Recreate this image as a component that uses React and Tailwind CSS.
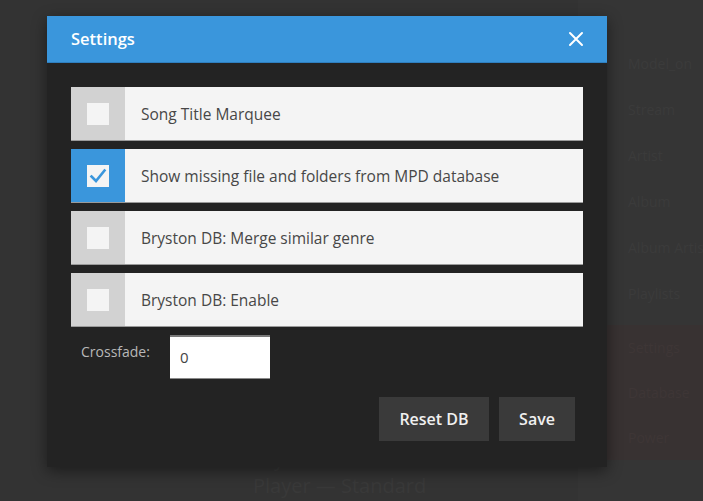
import React from "react";

const rows = [
  { label: "Song Title Marquee", checked: false },
  { label: "Show missing file and folders from MPD database", checked: true },
  { label: "Bryston DB: Merge similar genre", checked: false },
  { label: "Bryston DB: Enable", checked: false },
];

const sideItems = ["Model_on", "Stream", "Artist", "Album", "Album Artist", "Playlists"];

export default function App() {
  return (
    <div
      className="relative w-[703px] h-[501px] overflow-hidden bg-[#333333]"
      style={{ fontFamily: '"Open Sans", "Noto Sans", sans-serif' }}
    >
      {/* background page */}
      <div className="flex h-full">
        <div className="flex-1 flex flex-col justify-end pl-[253px] pb-[2px] text-[#393939] text-[20px] leading-[27px] whitespace-nowrap overflow-hidden">
          <div>Bryston Media</div>
          <div>Player — Standard</div>
        </div>
        <div className="w-[125px] flex flex-col bg-[#353535] pt-[40px] overflow-hidden">
          <div className="flex flex-col pl-[50px] text-[#3b3b3b] text-[14px]">
            {sideItems.map((s) => (
              <div key={s} className="h-[46px] flex items-center whitespace-nowrap">{s}</div>
            ))}
          </div>
          <div className="mt-[9px] h-[135px] bg-[#383232] flex flex-col pl-[50px] text-[#3e3636] text-[14px]">
            <div className="h-[46px] flex items-center whitespace-nowrap">Settings</div>
            <div className="h-[46px] flex items-center whitespace-nowrap">Database</div>
            <div className="h-[46px] flex items-center whitespace-nowrap">Power</div>
          </div>
        </div>
      </div>

      {/* modal */}
      <div className="absolute left-[47px] top-[16px] w-[560px] h-[451px] bg-[#232323] shadow-[0_4px_14px_rgba(0,0,0,0.45)] flex flex-col">
        <div className="h-[47px] bg-[#3a96dc] flex items-center justify-between pl-[24px] pr-[24px] border-b border-[#2f7fbf]">
          <span className="text-white text-[16.5px] font-semibold">Settings</span>
          <svg width="16" height="16" viewBox="0 0 16 16" className="mr-[-1px]">
            <path d="M2 2 L14 14 M14 2 L2 14" stroke="white" strokeWidth="2" strokeLinecap="round" />
          </svg>
        </div>
        <div className="flex flex-col px-[24px] pt-[24px]">
          <div className="flex flex-col gap-[8px]">
            {rows.map((r) => (
              <div key={r.label} className="h-[54px] flex bg-[#f4f4f4] border-b border-[#9a9a9a]">
                <div className={`w-[54px] flex items-center justify-center ${r.checked ? "bg-[#3a96dc]" : "bg-[#d2d2d2]"}`}>
                  <div className="w-[22px] h-[22px] bg-[#f4f4f4] flex items-center justify-center">
                    {r.checked && (
                      <svg width="22" height="22" viewBox="0 0 22 22">
                        <path d="M4.5 11.5 L9 16 L17.5 5.5" fill="none" stroke="#3a96dc" strokeWidth="2.6" strokeLinecap="square" />
                      </svg>
                    )}
                  </div>
                </div>
                <div className="flex-1 flex items-center pl-[16px] pt-[2px] text-[15.5px] text-[#474747]">{r.label}</div>
              </div>
            ))}
          </div>
          <div className="flex mt-[8px]">
            <div className="w-[99px] pl-[10px] pt-[6px] text-[14px] text-[#b8b8b8]">Crossfade:</div>
            <div className="w-[100px] h-[44px] bg-white border-t-2 border-t-[#7a7a7a] border-b border-b-[#8a8a8a] flex items-center pl-[10px] text-[15px] text-[#444]">
              0
            </div>
          </div>
          <div className="flex justify-end gap-[10px] mt-[18px] pr-[8px]">
            <button className="w-[110px] h-[44px] bg-[#3a3a3a] text-[#f0f0f0] text-[16px] font-semibold">Reset DB</button>
            <button className="w-[76px] h-[44px] bg-[#3a3a3a] text-[#f0f0f0] text-[16px] font-semibold">Save</button>
          </div>
        </div>
      </div>
    </div>
  );
}
